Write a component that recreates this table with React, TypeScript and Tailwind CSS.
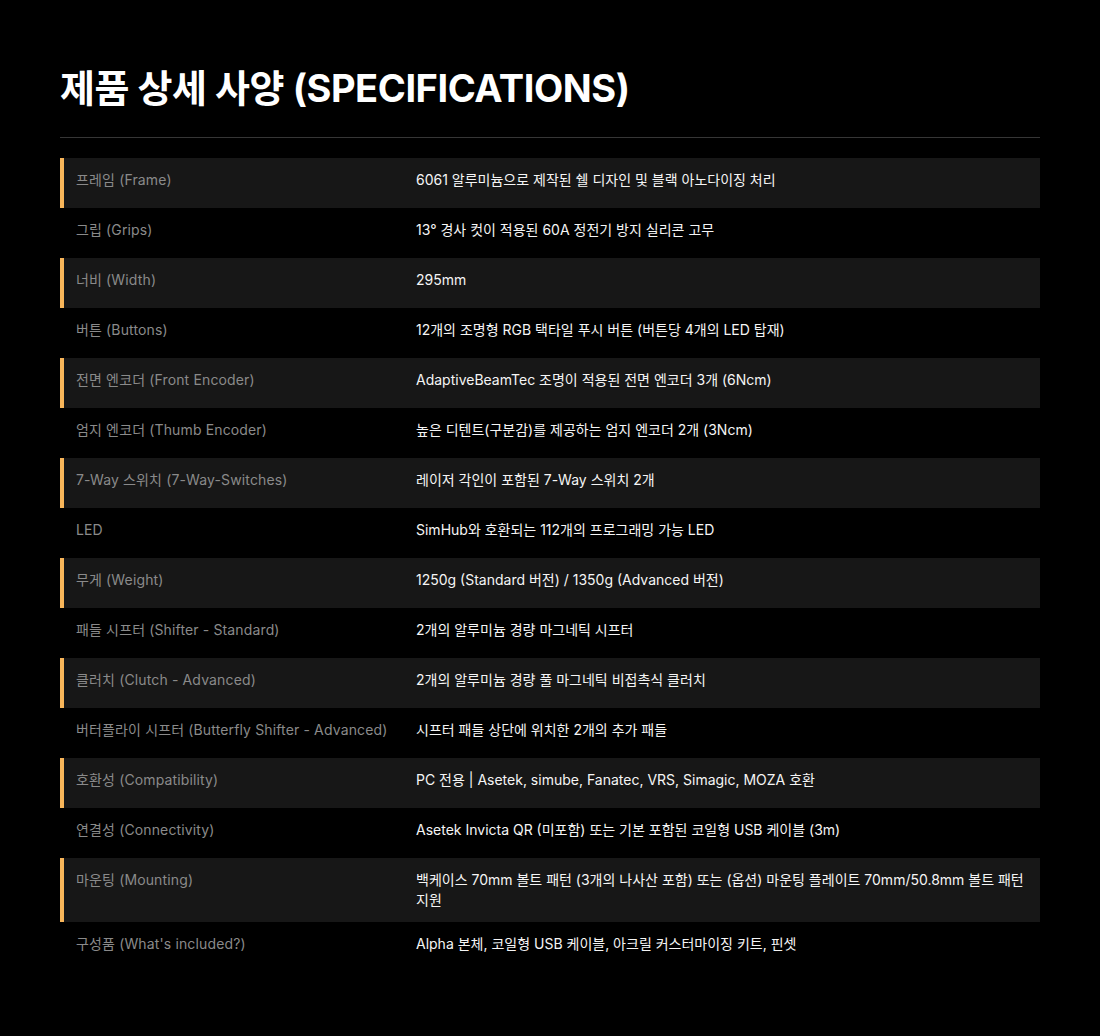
// Product specification table, Korean labels with English in parentheses.

const SPECS: [string, string][] = [
  ["프레임 (Frame)", "6061 알루미늄으로 제작된 쉘 디자인 및 블랙 아노다이징 처리"],
  ["그립 (Grips)", "13° 경사 컷이 적용된 60A 정전기 방지 실리콘 고무"],
  ["너비 (Width)", "295mm"],
  ["버튼 (Buttons)", "12개의 조명형 RGB 택타일 푸시 버튼 (버튼당 4개의 LED 탑재)"],
  ["전면 엔코더 (Front Encoder)", "AdaptiveBeamTec 조명이 적용된 전면 엔코더 3개 (6Ncm)"],
  ["엄지 엔코더 (Thumb Encoder)", "높은 디텐트(구분감)를 제공하는 엄지 엔코더 2개 (3Ncm)"],
  ["7-Way 스위치 (7-Way-Switches)", "레이저 각인이 포함된 7-Way 스위치 2개"],
  ["LED", "SimHub와 호환되는 112개의 프로그래밍 가능 LED"],
  ["무게 (Weight)", "1250g (Standard 버전) / 1350g (Advanced 버전)"],
  ["패들 시프터 (Shifter - Standard)", "2개의 알루미늄 경량 마그네틱 시프터"],
  ["클러치 (Clutch - Advanced)", "2개의 알루미늄 경량 풀 마그네틱 비접촉식 클러치"],
  ["버터플라이 시프터 (Butterfly Shifter - Advanced)", "시프터 패들 상단에 위치한 2개의 추가 패들"],
  ["호환성 (Compatibility)", "PC 전용 | Asetek, simube, Fanatec, VRS, Simagic, MOZA 호환"],
  ["연결성 (Connectivity)", "Asetek Invicta QR (미포함) 또는 기본 포함된 코일형 USB 케이블 (3m)"],
  ["마운팅 (Mounting)", "백케이스 70mm 볼트 패턴 (3개의 나사산 포함) 또는 (옵션) 마운팅 플레이트 70mm/50.8mm 볼트 패턴 지원"],
  ["구성품 (What's included?)", "Alpha 본체, 코일형 USB 케이블, 아크릴 커스터마이징 키트, 핀셋"],
]

const FONT = "font-['Inter','Noto_Sans_CJK_KR',sans-serif]"

export default function App() {
  return (
    <div className={`min-h-screen bg-black px-[60px] pt-[63px] pb-16 ${FONT}`}>
      <h2 className="text-[38px] font-bold leading-[50px] tracking-[-0.012em] text-white">
        제품 상세 사양 (SPECIFICATIONS)
      </h2>
      <div className="mt-[24px] h-px bg-[#363636]" />

      <div className="mt-5">
        {SPECS.map(([label, value], i) => {
          const striped = i % 2 === 0
          return (
            <div
              key={label}
              className={`grid min-h-[50px] grid-cols-[336px_1fr] items-start border-l-4 text-[14px] leading-5 ${
                striped ? "border-[#f8b65a] bg-[#171717]" : "border-transparent"
              }`}
            >
              <div className="py-3 pl-3 pr-2 tracking-[0.01em] text-[#8a8a8a]">{label}</div>
              <div className="py-3 pl-4 pr-3 text-[#f5f5f5]">{value}</div>
            </div>
          )
        })}
      </div>
    </div>
  )
}
